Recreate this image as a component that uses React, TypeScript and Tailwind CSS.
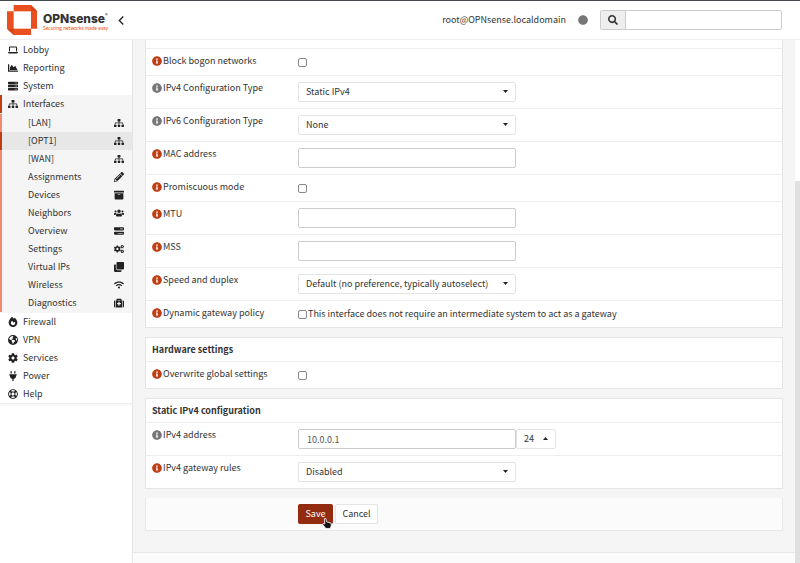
import { ReactNode } from "react";
import {
  FaArchive,
  FaChartArea,
  FaClone,
  FaCog,
  FaCogs,
  FaInfoCircle,
  FaMedkit,
  FaPencilAlt,
  FaPlug,
  FaSearch,
  FaServer,
  FaSitemap,
  FaUsers,
  FaWifi,
  FaRegLifeRing,
  FaCircle,
} from "react-icons/fa";
import { FaBarsProgress, FaEarthAmericas, FaFire, FaLaptop } from "react-icons/fa6";

const topItems = [
  { name: "Lobby", icon: FaLaptop },
  { name: "Reporting", icon: FaChartArea },
  { name: "System", icon: FaServer },
];

const interfaceItems = [
  { name: "[LAN]", icon: FaSitemap },
  { name: "[OPT1]", icon: FaSitemap, active: true },
  { name: "[WAN]", icon: FaSitemap },
  { name: "Assignments", icon: FaPencilAlt },
  { name: "Devices", icon: FaArchive },
  { name: "Neighbors", icon: FaUsers },
  { name: "Overview", icon: FaBarsProgress },
  { name: "Settings", icon: FaCogs },
  { name: "Virtual IPs", icon: FaClone },
  { name: "Wireless", icon: FaWifi },
  { name: "Diagnostics", icon: FaMedkit },
];

const bottomItems = [
  { name: "Firewall", icon: FaFire },
  { name: "VPN", icon: FaEarthAmericas },
  { name: "Services", icon: FaCog },
  { name: "Power", icon: FaPlug },
  { name: "Help", icon: FaRegLifeRing },
];

function Logo() {
  return (
    <a href="#" className="flex items-center gap-1.5">
      <svg viewBox="0 0 90 90" className="size-[30px]">
        <path d="M20 0h52l18 18v53H72v19H20L0 71V19h20z" fill="#ea4f20" />
        <path d="M72 0l18 18H72zM0 71h20v19z" fill="#d9431a" />
        <path d="M20 19h52v52H20z" fill="#fff" />
      </svg>
      <span className="flex flex-col whitespace-nowrap pt-1">
        <span className="flex items-start font-['Inter'] text-[12px] font-extrabold leading-3 text-[#333]">
          OPNsense
          <span className="text-[4px] leading-1">®</span>
        </span>
        <span className="font-['Lato'] text-[5px] leading-[6px] text-[#ea4f20]">
          Securing networks made easy
        </span>
      </span>
    </a>
  );
}

function MenuItem({ item }: { item: any }) {
  const Icon = item.icon;
  return (
    <li>
      <a href="#" className="flex h-[18px] items-center gap-[5px] pl-2 hover:bg-[#f5f5f5]">
        <Icon className="h-2.5 w-auto text-[#222]" />
        {item.name}
      </a>
    </li>
  );
}

function Row({
  id,
  label,
  muted,
  check,
  children,
}: {
  id: string;
  label: string;
  muted?: boolean;
  check?: boolean;
  children: ReactNode;
}) {
  return (
    <div className={`flex border-t border-[#eee] pl-1.5 ${check ? "h-[27px]" : "h-[33px]"}`}>
      <label htmlFor={id} className="flex h-6 w-[146px] shrink-0 items-center gap-px">
        <FaInfoCircle className={`size-2.5 ${muted ? "text-[#777]" : "text-[#c03e14]"}`} />
        {label}
      </label>
      <div className="flex flex-1 items-center">{children}</div>
    </div>
  );
}

function Checkbox({ id }: { id: string }) {
  return (
    <input
      id={id}
      type="checkbox"
      className="size-[9px] appearance-none rounded-[2px] border border-[#888] bg-white checked:bg-[#c03e14]"
    />
  );
}

function TextInput({ id, value }: { id: string; value?: string }) {
  return (
    <input
      id={id}
      type="text"
      defaultValue={value}
      className="h-5 w-[218px] rounded-[2px] border border-[#ccc] bg-white px-2 text-[#555]"
    />
  );
}

function Caret({ up }: { up?: boolean }) {
  return (
    <svg
      viewBox="0 0 10 6"
      className="pointer-events-none absolute right-2 top-2 h-[3px] w-[5px]"
    >
      <path d={up ? "M0 6l5-6 5 6z" : "M0 0h10L5 6z"} fill="#222" />
    </svg>
  );
}

function Select({ id, options }: { id: string; options: string[] }) {
  return (
    <div className="relative w-[218px]">
      <select
        id={id}
        className="block h-5 w-full appearance-none rounded-[2px] border border-[#e5e5e5] bg-white pl-[7px] pr-5"
      >
        {options.map((option) => (
          <option key={option}>{option}</option>
        ))}
      </select>
      <Caret />
    </div>
  );
}

function Panel({ title, children }: { title?: string; children: ReactNode }) {
  return (
    <section className="border border-t-0 border-[#e5e5e5] bg-white">
      {title && (
        <h2 className="h-6 border-t border-[#e5e5e5] pl-1.5 font-bold leading-6">{title}</h2>
      )}
      {children}
    </section>
  );
}

export default function App() {
  return (
    <div className="flex min-h-screen flex-col border-t border-[#45484d] bg-white font-['Noto_Sans_CJK_SC',sans-serif] text-[9px] leading-4 text-[#333]">
      <header className="flex h-[39px] items-center border-b border-[#eee] pl-[7px] pr-[18px]">
        <Logo />
        <button type="button" aria-label="Collapse menu" className="ml-2.5">
          <svg viewBox="0 0 10 16" className="h-[9px] w-1.5" fill="none" stroke="#222" strokeWidth="2.4">
            <path d="M9 1L2 8l7 7" />
          </svg>
        </button>
        <span className="ml-auto">root@OPNsense.localdomain</span>
        <FaCircle className="ml-3 size-[10px] text-[#777]" />
        <form className="ml-3 flex h-5 w-[182px] rounded-[2px] border border-[#ccc]">
          <label
            htmlFor="search"
            className="flex w-[25px] items-center justify-center border-r border-[#ccc] bg-[#eee]"
          >
            <FaSearch className="size-2.5" />
          </label>
          <input
            id="search"
            type="text"
            aria-label="Search"
            className="min-w-0 flex-1 px-2 outline-none"
          />
        </form>
      </header>

      <div className="flex flex-1">
        <aside className="w-[132px] shrink-0">
          <nav className="border-b border-[#eee] pt-px shadow-xs">
            <ul>
              {topItems.map((item) => (
                <MenuItem key={item.name} item={item} />
              ))}
              <li className="bg-[#f5f5f5]">
                <a
                  href="#"
                  className="flex h-[18px] items-center gap-[5px] border-l-2 border-[#c03e14] pl-1.5"
                >
                  <FaSitemap className="h-2.5 w-auto text-[#222]" />
                  Interfaces
                </a>
                <ul className="py-px">
                  {interfaceItems.map(({ name, icon: Icon, active }) => (
                    <li key={name}>
                      <a
                        href="#"
                        className={`flex h-[18px] items-center justify-between border-l-2 pl-[26px] pr-[7px] ${
                          active ? "border-[#c03e14] bg-[#e7e7e7]" : "border-[#f08a70]"
                        }`}
                      >
                        {name}
                        <span className="flex w-3 justify-center">
                          <Icon className="h-2.5 w-auto shrink-0 text-[#222]" />
                        </span>
                      </a>
                    </li>
                  ))}
                </ul>
              </li>
              {bottomItems.map((item) => (
                <MenuItem key={item.name} item={item} />
              ))}
            </ul>
          </nav>
        </aside>

        <div className="flex flex-1 flex-col border-l border-[#e5e5e5] bg-[#f5f5f5]">
          <main className="flex flex-col gap-[9px] px-3 pb-[21px]">
            <Panel>
              <div className="h-2" />
              <Row id="bogon" label="Block bogon networks" check>
                <Checkbox id="bogon" />
              </Row>
              <Row id="type4" label="IPv4 Configuration Type" muted>
                <Select id="type4" options={["Static IPv4", "DHCP", "None"]} />
              </Row>
              <Row id="type6" label="IPv6 Configuration Type" muted>
                <Select id="type6" options={["None", "Static IPv6", "DHCPv6"]} />
              </Row>
              <Row id="mac" label="MAC address">
                <TextInput id="mac" />
              </Row>
              <Row id="promisc" label="Promiscuous mode" check>
                <Checkbox id="promisc" />
              </Row>
              <Row id="mtu" label="MTU">
                <TextInput id="mtu" />
              </Row>
              <Row id="mss" label="MSS">
                <TextInput id="mss" />
              </Row>
              <Row id="media" label="Speed and duplex">
                <Select
                  id="media"
                  options={["Default (no preference, typically autoselect)"]}
                />
              </Row>
              <Row id="gateway" label="Dynamic gateway policy" check>
                <Checkbox id="gateway" />
                <label htmlFor="gateway" className="ml-px">
                  This interface does not require an intermediate system to act as a gateway
                </label>
              </Row>
            </Panel>

            <Panel title="Hardware settings">
              <Row id="hw" label="Overwrite global settings" check>
                <Checkbox id="hw" />
              </Row>
            </Panel>

            <Panel title="Static IPv4 configuration">
              <Row id="ipaddr" label="IPv4 address" muted>
                <TextInput id="ipaddr" value="10.0.0.1" />
                <div className="relative w-10">
                  <select
                    aria-label="Subnet prefix"
                    className="block h-5 w-full appearance-none rounded-[2px] border border-[#e5e5e5] bg-white pl-[7px]"
                  >
                    <option>24</option>
                    <option>32</option>
                  </select>
                  <Caret up />
                </div>
              </Row>
              <Row id="rules" label="IPv4 gateway rules">
                <Select id="rules" options={["Disabled"]} />
              </Row>
            </Panel>

            <div className="flex h-[33px] items-center gap-0.5 border border-t-0 border-[#e8e8e8] bg-[#fbfbfb] pl-[152px]">
              <div className="relative">
                <button
                  type="button"
                  className="block h-5 w-[35px] rounded-[2px] bg-[#922b10] text-white"
                >
                  Save
                </button>
                <svg
                  viewBox="0 0 18 20"
                  className="pointer-events-none absolute left-6 top-3.5 h-[11px] w-2.5"
                >
                  <path
                    d="M4 1h3l1 6 8 2 1 4-2 6H7l-6-7 1-2 3 1z"
                    fill="#111"
                    stroke="#fff"
                    strokeWidth="1.5"
                  />
                </svg>
              </div>
              <button
                type="button"
                className="h-5 w-[43px] rounded-[2px] border border-[#e5e5e5] bg-white"
              >
                Cancel
              </button>
            </div>
          </main>
          <footer className="flex-1 border-t border-[#e8e8e8] bg-[#fbfbfb]" />
        </div>

        {/* page scroll track */}
        <div className="flex w-[5px] flex-col justify-end bg-white">
          <div className="h-[73%] bg-[#e0e0e0]" />
        </div>
      </div>
    </div>
  );
}
